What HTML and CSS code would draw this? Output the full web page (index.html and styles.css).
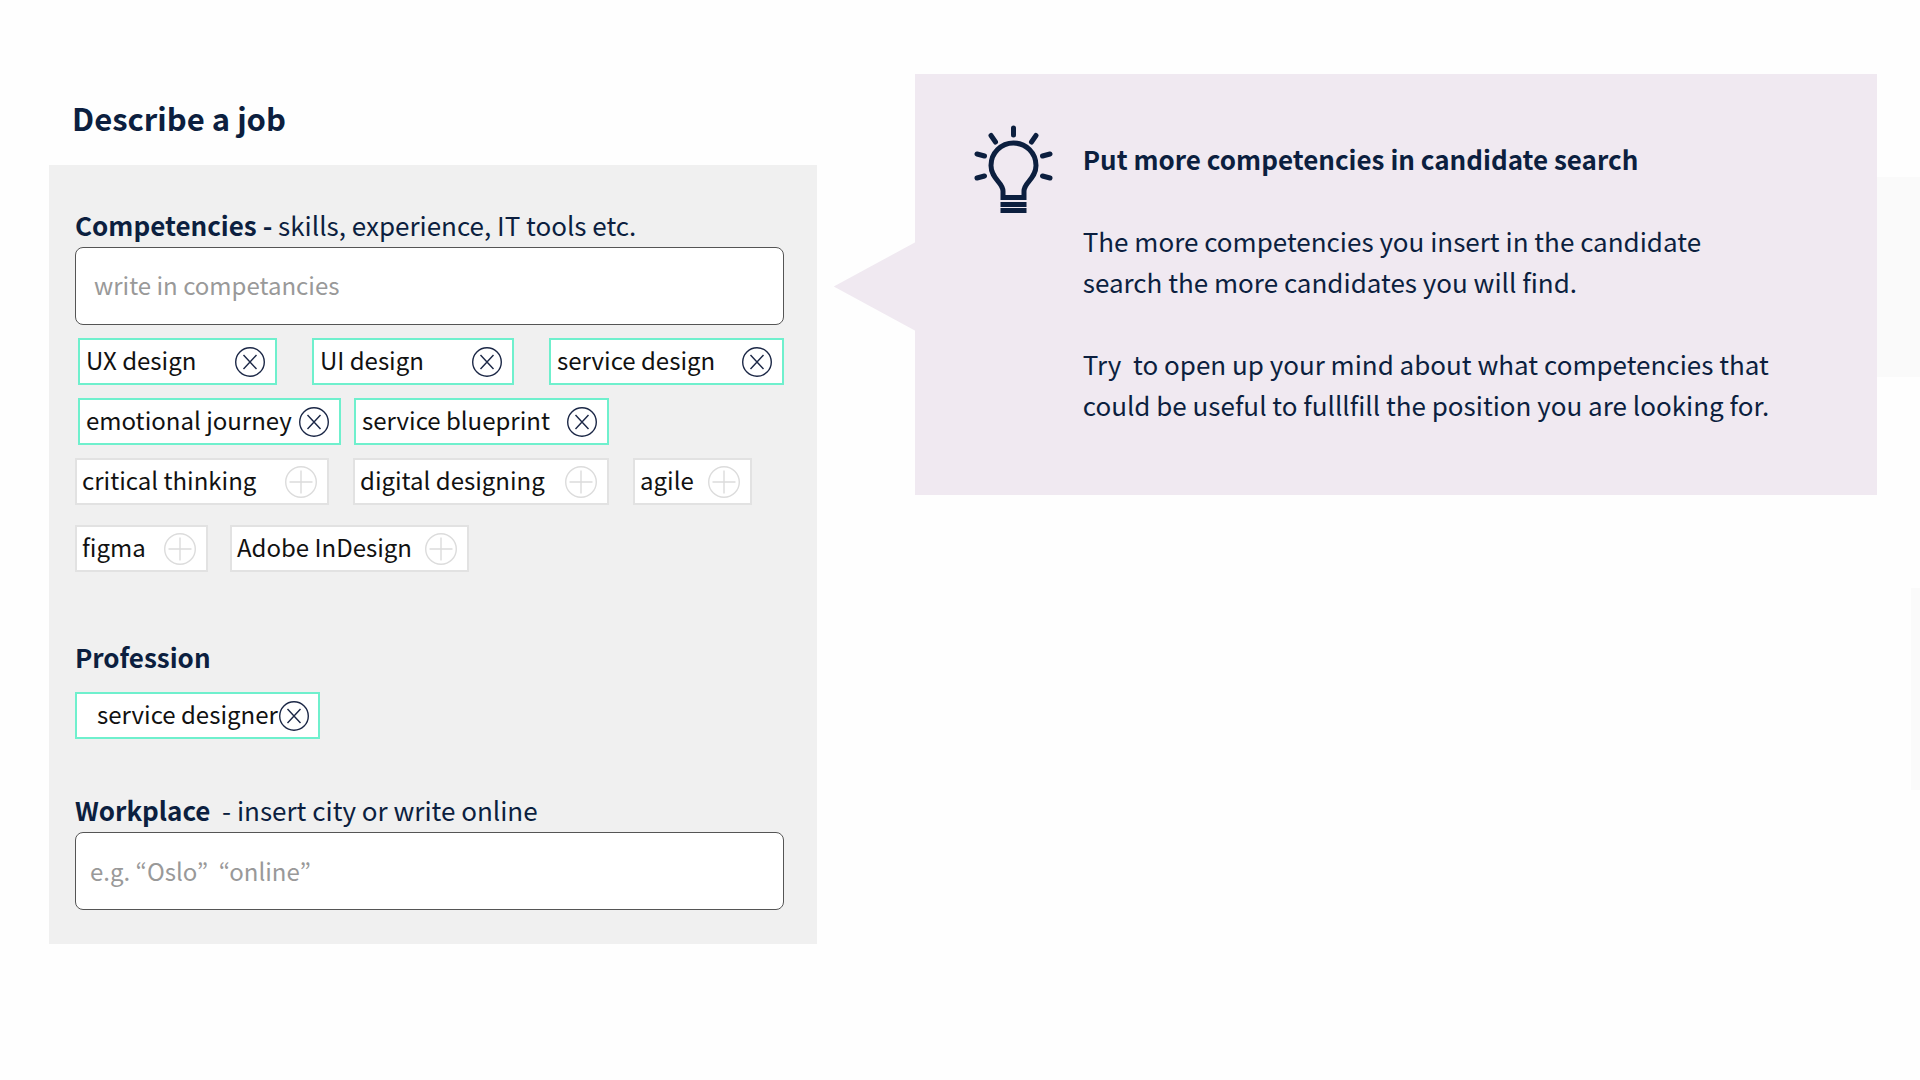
FILE: index.html
```
<!DOCTYPE html>
<html lang="en">
<head>
    <meta charset="UTF-8">
    <meta name="viewport" content="width=device-width, initial-scale=1.0">
    <title>Describe a job</title>
    <link rel="stylesheet" href="styles.css">
</head>
<body>

<svg class="sprite" aria-hidden="true">
    <symbol id="remove" viewBox="0 0 32 32">
        <circle cx="16" cy="16" r="14.3"/>
        <path d="M9.5 9 L22.5 23 M22.5 9 L9.5 23"/>
    </symbol>
    <symbol id="add" viewBox="0 0 32 32">
        <circle cx="16" cy="16" r="15.3"/>
        <path d="M16 4.500 V27.500 M4.500 16 H27.500"/>
    </symbol>
</svg>

<div class="page">
    <main class="job">
        <h1 class="title">Describe a job</h1>

        <form class="panel">
            <label class="label" for="competencies"><b>Competencies -</b> skills, experience, IT tools etc.</label>
            <input class="field" id="competencies" type="text" placeholder="write in competancies">

            <div class="chips chips-first">
                <div class="chip selected"><span>UX design</span><button type="button" class="icon" aria-label="Remove UX design"><svg><use href="#remove"/></svg></button></div>
                <div class="chip selected"><span>UI design</span><button type="button" class="icon" aria-label="Remove UI design"><svg><use href="#remove"/></svg></button></div>
                <div class="chip selected"><span>service design</span><button type="button" class="icon" aria-label="Remove service design"><svg><use href="#remove"/></svg></button></div>
            </div>
            <div class="chips chips-second">
                <div class="chip selected"><span>emotional journey</span><button type="button" class="icon" aria-label="Remove emotional journey"><svg><use href="#remove"/></svg></button></div>
                <div class="chip selected"><span>service blueprint</span><button type="button" class="icon" aria-label="Remove service blueprint"><svg><use href="#remove"/></svg></button></div>
            </div>
            <div class="chips chips-third">
                <div class="chip"><span>critical thinking</span><button type="button" class="icon" aria-label="Add critical thinking"><svg><use href="#add"/></svg></button></div>
                <div class="chip"><span>digital designing</span><button type="button" class="icon" aria-label="Add digital designing"><svg><use href="#add"/></svg></button></div>
                <div class="chip"><span>agile</span><button type="button" class="icon" aria-label="Add agile"><svg><use href="#add"/></svg></button></div>
            </div>
            <div class="chips chips-fourth">
                <div class="chip"><span>figma</span><button type="button" class="icon" aria-label="Add figma"><svg><use href="#add"/></svg></button></div>
                <div class="chip"><span>Adobe InDesign</span><button type="button" class="icon" aria-label="Add Adobe InDesign"><svg><use href="#add"/></svg></button></div>
            </div>

            <h2 class="label profession">Profession</h2>
            <div class="chips chips-profession">
                <div class="chip selected"><span>service designer</span><button type="button" class="icon" aria-label="Remove service designer"><svg><use href="#remove"/></svg></button></div>
            </div>

            <label class="label workplace" for="workplace"><b>Workplace</b>&nbsp; - insert city or write online</label>
            <input class="field field-workplace" id="workplace" type="text" placeholder="e.g. “Oslo”&nbsp; “online”">
        </form>
    </main>

    <aside class="tip">
        <svg class="bulb" viewBox="0 0 80 90" aria-hidden="true">
            <path class="rays" d="M40.500 4 V11 M18 11.500 L22.500 18 M63 11.500 L58.500 18 M4 30 L11.500 32 M77 30 L69.500 32 M4 54 L11.500 52 M77 54 L69.500 52"/>
            <path class="glass" d="M30 73.500 V67 C30 58 18 55 18 41.500 A22.500 22.500 0 0 1 63 41.500 C63 55 51 58 51 67 V73.500 Z"/>
            <path class="base" d="M27.500 78 H53.500 V83 H27.500 Z M27.500 84 H53.500 V89 H27.500 Z"/>
        </svg>
        <div class="tip-text">
            <h2>Put more competencies in candidate search</h2>
            <p>The more competencies you insert in the candidate<br>search the more candidates you will find.</p>
            <p>Try&nbsp; to open up your mind about what competencies that<br>could be useful to fulllfill the position you are looking for.</p>
        </div>
    </aside>
</div>

<div class="shade shade-top"></div>
<div class="shade shade-middle"></div>

</body>
</html>
```
FILE: styles.css
```
* {
    box-sizing: border-box;
}

body {
    margin: 0;
    position: relative;
    min-height: 100vh;
    background-color: #fefefe;
    color: #0c1f3f;
    font-family: "Noto Sans CJK KR", "Noto Sans", sans-serif;
    font-size: 26px;
    overflow-x: hidden;
}

h1, h2, p {
    margin: 0;
}

.sprite {
    display: none;
}

.page {
    display: flex;
    align-items: flex-start;
    padding: 74px 43px 74px 49px;
    gap: 98px;
}

.job {
    width: 42%;
}

.title {
    margin: 20px 0 23px 23px;
    font-size: 31px;
    line-height: 48px;
}

.panel {
    padding: 40px 33px 34px 26px;
    background-color: #f0f0f0;
}

.label {
    display: block;
    margin-bottom: 2px;
    font-size: 26px;
    line-height: 40px;
    font-weight: normal;
}

.field {
    display: block;
    width: 100%;
    height: 78px;
    padding: 0 18px 4px;
    border: 1px solid #555;
    border-radius: 8px;
    background-color: #fff;
    font-family: inherit;
    font-size: 24px;
}

.field::placeholder {
    color: #999;
    opacity: 1;
}

.field-workplace {
    padding: 0 14px 2px;
}

.chips {
    display: grid;
}

.chips-first {
    grid-template-columns: 199px 202px 1fr;
    gap: 35px;
    margin: 13px 0 0 3px;
}

.chips-second {
    grid-template-columns: 263px 255px;
    gap: 13px;
    margin: 13px 0 0 3px;
}

.chips-third {
    grid-template-columns: 254px 256px 119px;
    gap: 24px;
    margin-top: 13px;
}

.chips-fourth {
    grid-template-columns: 133px 239px;
    gap: 22px;
    margin-top: 20px;
}

.chips-profession {
    grid-template-columns: 245px;
    margin-top: 15px;
}

.chip {
    display: flex;
    align-items: center;
    justify-content: space-between;
    height: 47px;
    padding: 0 10px 0 5px;
    border: 2px solid #e2e2e2;
    background-color: #fff;
    color: #111;
    font-size: 24px;
    line-height: 32px;
    white-space: nowrap;
}

.chip span {
    padding-bottom: 3px;
}

.chip.selected {
    padding: 0 9px 0 6px;
    border-color: #6ff0cd;
}

.chips-profession .chip.selected {
    padding-left: 20px;
}

.icon {
    flex: none;
    width: 32px;
    height: 32px;
    padding: 0;
    border: none;
    background: none;
    cursor: pointer;
}

.icon svg {
    display: block;
    width: 32px;
    height: 32px;
    fill: none;
    stroke: #dcdcdc;
    stroke-width: 1.4;
}

.selected .icon svg {
    stroke: #1b2746;
}

.profession {
    margin-top: 65px;
    font-weight: bold;
}

.workplace {
    margin-top: 51px;
}

.tip {
    position: relative;
    flex: 1;
    display: flex;
    align-items: flex-start;
    gap: 30px;
    padding: 50px 58px 70px;
    background-color: #f0e9f1;
}

/* arrow pointing at the competencies field, 1px under the box so no seam shows */
.tip::before {
    content: "";
    position: absolute;
    top: 168px;
    left: -81px;
    width: 82px;
    height: 89px;
    background-color: #f0e9f1;
    clip-path: polygon(100% 0, 100% 100%, 0 50%);
}

.bulb {
    flex: none;
    width: 80px;
    height: 90px;
}

.rays {
    fill: none;
    stroke: #0c1f3f;
    stroke-width: 5;
    stroke-linecap: round;
}

.glass {
    fill: none;
    stroke: #0c1f3f;
    stroke-width: 5;
}

.base {
    fill: #0c1f3f;
}

.tip-text {
    padding-top: 14px;
    line-height: 41px;
}

.tip-text h2 {
    font-size: 26px;
}

.tip-text p {
    margin-top: 41px;
}

/* faint panels at the right edge */
.shade {
    position: absolute;
    right: 0;
    background-color: #fafafa;
}

.shade-top {
    top: 177px;
    width: 43px;
    height: 200px;
}

.shade-middle {
    top: 588px;
    width: 9px;
    height: 202px;
}
```
